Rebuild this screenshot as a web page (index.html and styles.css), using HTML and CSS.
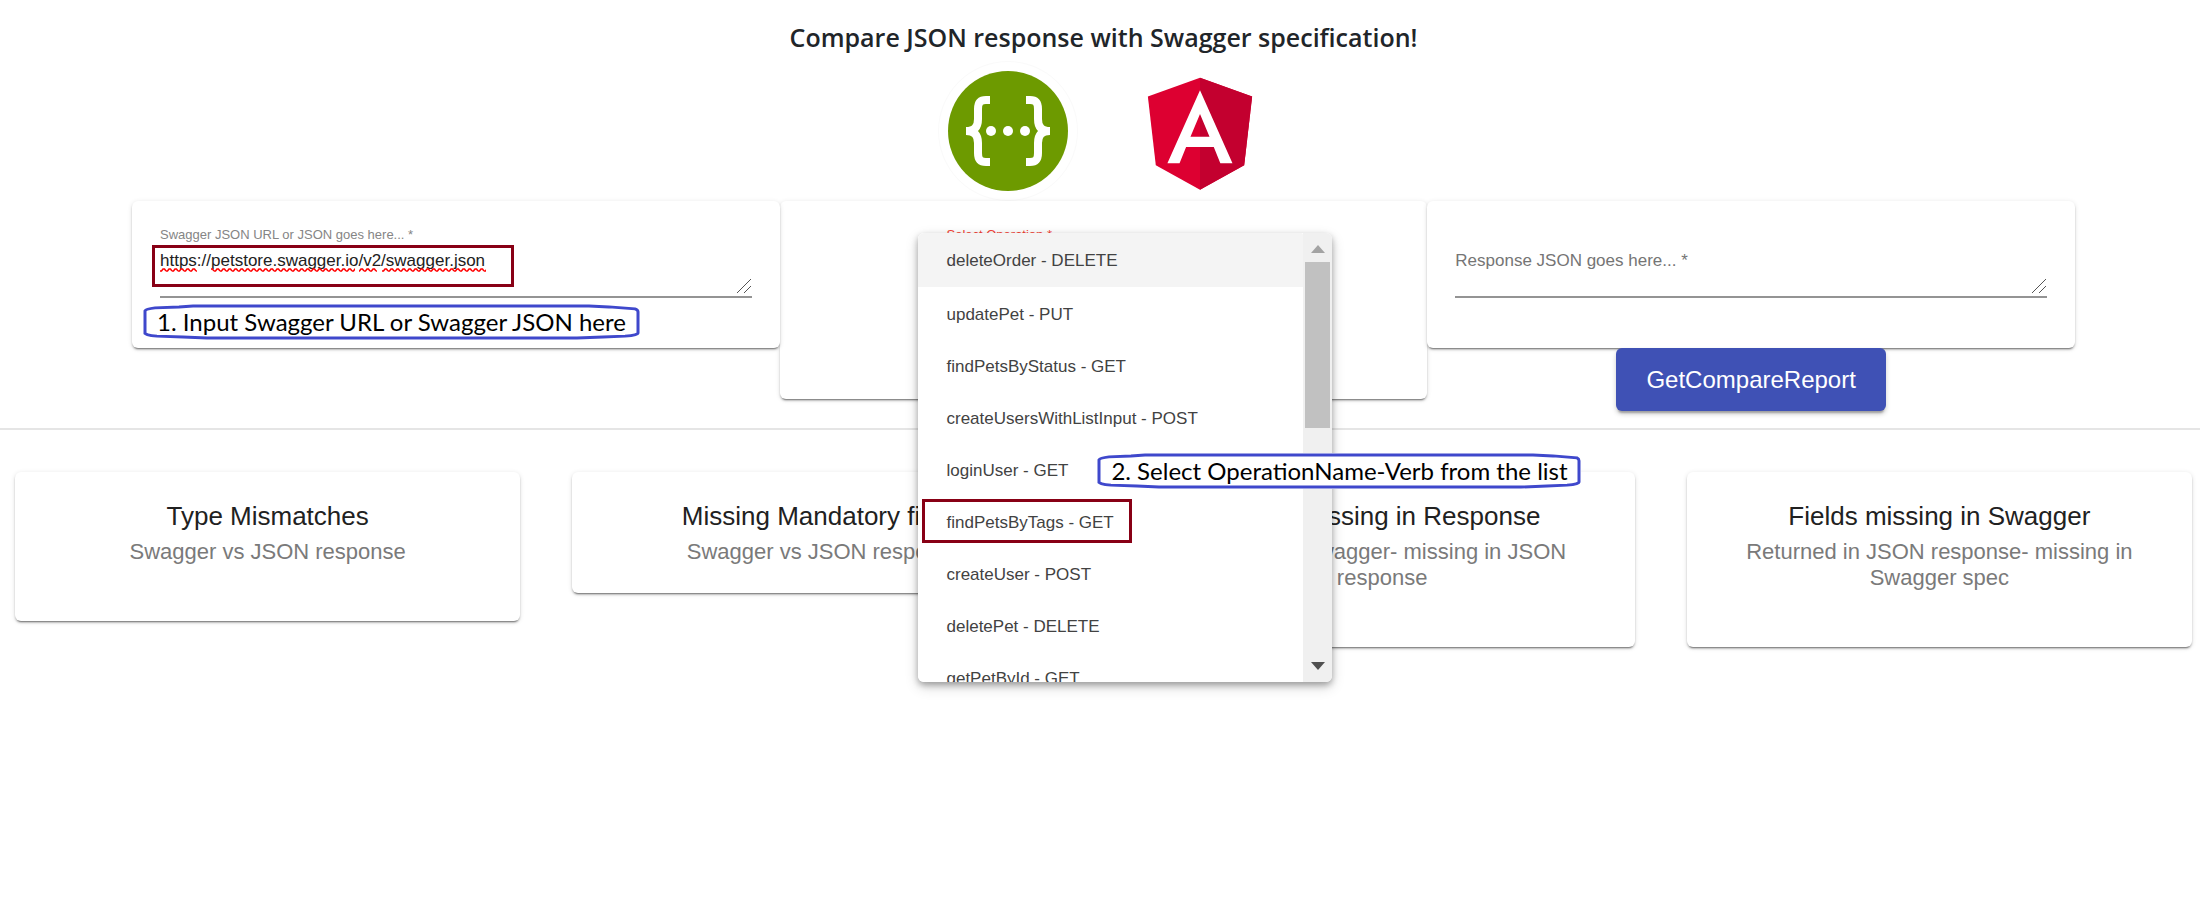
FILE: index.html
```html
<!DOCTYPE html>
<html lang="en">
<head>
<meta charset="utf-8">
<title>Compare JSON response with Swagger specification!</title>
<link rel="stylesheet" href="styles.css">
</head>
<body>
<header class="header">
  <h1 class="page-title">Compare JSON response with Swagger specification!</h1>
  <div class="logos">
    <svg class="logo" viewBox="0 0 140 140" role="img" aria-label="Swagger">
      <circle cx="70" cy="70" r="69.500" fill="none" stroke="#fafafa"/>
      <circle cx="70" cy="70" r="60" fill="#6d9a00"/>
      <g fill="none" stroke="#fff" stroke-width="8">
        <path d="M52 39h-4c-6 0-8 3-8 9V58c0 7-3 12-12 12c9 0 12 5 12 12v10c0 6 2 9 8 9h4"/>
        <path d="M88 39h4c6 0 8 3 8 9V58c0 7 3 12 12 12c-9 0-12 5-12 12v10c0 6-2 9-8 9h-4"/>
      </g>
      <g fill="#fff"><circle cx="53" cy="70" r="5"/><circle cx="70" cy="70" r="5"/><circle cx="87" cy="70" r="5"/></g>
    </svg>
    <svg class="logo" viewBox="0 0 250 250" role="img" aria-label="Angular">
      <path fill="#dd0031" d="M125 30 31.900 63.200l14.200 123.100L125 230l78.900-43.700 14.200-123.100z"/>
      <path fill="#c3002f" d="M125 30v200l78.900-43.700 14.200-123.100z"/>
      <path fill="#fff" d="M125 52.100 66.800 182.600h21.700l11.700-29.200h49.400l11.700 29.200H183zM142 135.400h-34l17-40.900z"/>
    </svg>
  </div>
</header>

<form class="compare">
  <section class="column">
    <div class="card field">
      <label class="field-label" for="spec">Swagger JSON URL or JSON goes here... *</label>
      <div class="input-wrap">
        <textarea class="text-area" id="spec" spellcheck="false">https://petstore.swagger.io/v2/swagger.json</textarea>
        <svg class="squiggle" viewBox="0 0 326 4" aria-hidden="true">
          <defs><pattern id="wave" width="6" height="4" patternUnits="userSpaceOnUse"><path d="M0 3 1.500 3 3 1 4.500 1 6 3" fill="none" stroke="#f00" stroke-width="1.500"/></pattern></defs>
          <path fill="url(#wave)" d="M0 0h37v4H0zM51 0h144v4H51zM199 0h18v4h-18zM222 0h104v4H222z"/>
        </svg>
        <svg class="grip" viewBox="0 0 14 14" aria-hidden="true"><path d="M0 14 14 0M7 14 14 7" stroke="#555" fill="none"/></svg>
        <span class="mark mark-url"></span>
      </div>
      <p class="note note-input">
        <svg class="note-outline" viewBox="0 0 497 37" preserveAspectRatio="none" aria-hidden="true"><path d="M2 31V7Q3 5 12 4L36 3 50 2H446L466 3 492 5Q495 6 495 8V30Q495 32 482 33L460 34 434 35H64L40 34 14 33Q2 32 2 30z"/></svg>
        1. Input Swagger URL or Swagger JSON here
      </p>
    </div>
  </section>

  <section class="column">
    <div class="card card-select">
      <div class="select-field">
        <label class="field-label field-label-error" for="operation">Select Operation *</label>
        <div class="panel">
          <div class="panel-body">
            <select class="options" id="operation" size="9">
              <option>deleteOrder - DELETE</option>
              <option>updatePet - PUT</option>
              <option>findPetsByStatus - GET</option>
              <option>createUsersWithListInput - POST</option>
              <option>loginUser - GET</option>
              <option>findPetsByTags - GET</option>
              <option>createUser - POST</option>
              <option>deletePet - DELETE</option>
              <option>getPetById - GET</option>
            </select>
            <div class="scrollbar" aria-hidden="true">
              <svg class="arrow" viewBox="0 0 14 8"><path d="M0 8 7 0l7 8z" fill="#a3a3a3"/></svg>
              <span class="thumb"></span>
              <svg class="arrow arrow-down" viewBox="0 0 14 8"><path d="M0 0 7 8l7-8z" fill="#505050"/></svg>
            </div>
          </div>
          <span class="mark mark-option"></span>
          <p class="note note-select">
            <svg class="note-outline" viewBox="0 0 484 37" preserveAspectRatio="none" aria-hidden="true"><path d="M2 31V7Q3 5 12 4L34 3 48 2H436L456 3 480 5Q482 6 482 8V30Q482 32 470 33L450 34 424 35H62L40 34 14 33Q2 32 2 30z"/></svg>
            2. Select OperationName-Verb from the list
          </p>
        </div>
      </div>
    </div>
  </section>

  <section class="column">
    <div class="card field field-empty">
      <div class="input-wrap">
        <textarea class="text-area" aria-label="Response JSON" placeholder="Response JSON goes here... *"></textarea>
        <svg class="grip" viewBox="0 0 14 14" aria-hidden="true"><path d="M0 14 14 0M7 14 14 7" stroke="#555" fill="none"/></svg>
      </div>
    </div>
    <button class="report-button" type="button">GetCompareReport</button>
  </section>
</form>

<hr class="divider">

<main class="results">
  <article class="card result result-tall">
    <h2 class="result-title">Type Mismatches</h2>
    <p class="result-text">Swagger vs JSON response</p>
  </article>
  <article class="card result">
    <h2 class="result-title">Missing Mandatory fields</h2>
    <p class="result-text">Swagger vs JSON response</p>
  </article>
  <article class="card result result-tall">
    <h2 class="result-title">Fields missing in Response</h2>
    <p class="result-text">Present in Swagger- missing in JSON response</p>
  </article>
  <article class="card result result-tall">
    <h2 class="result-title">Fields missing in Swagger</h2>
    <p class="result-text">Returned in JSON response- missing in Swagger spec</p>
  </article>
</main>
</body>
</html>
```
FILE: styles.css
```css
* { box-sizing: border-box; }

body {
  min-height: 100vh;
  margin: 0;
  background: #fff;
  color: #212121;
  font-family: "Liberation Sans", Arial, sans-serif;
}

.header { padding: 19px 8px 0 15px; }

.page-title {
  margin: 0 0 6px;
  color: #212529;
  font: 600 25px/36px "Open Sans", "Noto Sans", sans-serif;
  text-align: center;
}

.logos { display: flex; justify-content: center; gap: 52px; }
.logo { width: 140px; height: 140px; }

.compare {
  display: grid;
  grid-template-columns: repeat(3, 1fr);
  align-items: start;
  padding: 0 125px 0 132px;
}

.column { display: flex; flex-direction: column; align-items: center; }

.card {
  width: 100%;
  border-radius: 6px;
  background: #fff;
  box-shadow: 0 3px 1px -2px rgba(0, 0, 0, .3), 0 2px 2px rgba(0, 0, 0, .2), 0 1px 5px rgba(0, 0, 0, .12);
}

.field { position: relative; padding: 26px 28px 50px; }
.field-empty { padding-top: 42px; }

.field-label {
  display: block;
  color: #858585;
  font-size: 13px;
  line-height: 16px;
}
.field-label-error { color: #f44336; }

.input-wrap { position: relative; }

.text-area {
  display: block;
  width: 100%;
  height: 55px;
  padding: 8px 0 0;
  border: 0;
  border-bottom: 2px solid #949494;
  outline: 0;
  background: transparent;
  color: #212121;
  font: 17px/20px "Liberation Sans", Arial, sans-serif;
  resize: none;
}
.text-area::placeholder { color: #757575; opacity: 1; }

.squiggle { position: absolute; top: 25px; left: 0; width: 326px; height: 4px; }
.grip { position: absolute; right: 1px; bottom: 5px; width: 14px; height: 14px; }

.mark { position: absolute; border: 3px solid #880015; }
.mark-url { top: 2px; left: -8px; width: 362px; height: 42px; }
.mark-option { top: 266px; left: 4px; width: 210px; height: 44px; }

.note {
  position: absolute;
  margin: 0;
  color: #000;
  font: 24px/36px Lato, sans-serif;
  text-align: center;
  white-space: nowrap;
}
.note-input { top: 103px; left: 11px; width: 497px; }
.note-select { top: 220px; left: 179px; width: 484px; background: #fff; }
.note-outline {
  position: absolute;
  inset: 0;
  width: 100%;
  height: 100%;
  fill: none;
  stroke: #3f48cc;
  stroke-width: 3px;
}

.card-select { padding: 26px 28px 156px; }
.select-field { position: relative; width: 314px; margin: 0 auto; }

.panel {
  position: absolute;
  z-index: 1;
  top: 6px;
  left: -28px;
  width: 414px;
  border-radius: 6px;
  background: #fff;
  box-shadow: 0 3px 6px rgba(0, 0, 0, .3), 0 5px 14px rgba(0, 0, 0, .16);
}
.panel-body { display: flex; height: 449px; overflow: hidden; border-radius: 6px; }

.options {
  flex: 1;
  height: 480px;
  padding: 0;
  border: 0;
  outline: 0;
  overflow: hidden;
  background: #fff;
  color: #424242;
  font: 17px/20px "Liberation Sans", Arial, sans-serif;
}
.options option { height: 52px; padding: 18px 28px 14px; color: #424242; }
.options option:first-child { height: 54px; background: #f4f4f4; }

.scrollbar {
  display: flex;
  flex-direction: column;
  align-items: center;
  width: 29px;
  padding: 12px 2px;
  background: #f0f0f0;
}
.arrow { width: 14px; height: 8px; }
.arrow-down { margin-top: auto; }
.thumb { width: 100%; height: 166px; margin-top: 9px; background: #c1c1c1; }

.report-button {
  padding: 16px 30px;
  border: 0;
  border-radius: 6px;
  background: #3f51b5;
  box-shadow: 0 4px 2px -2px rgba(0, 0, 0, .25), 0 3px 5px rgba(0, 0, 0, .2);
  color: #fff;
  font: 24px/31px "Liberation Sans", Arial, sans-serif;
  z-index: 1;
}

.divider {
  height: 2px;
  margin: 17px 0 42px;
  border: 0;
  background: #e5e5e5;
}

.results {
  display: grid;
  grid-template-columns: repeat(4, 1fr);
  align-items: start;
  gap: 52px;
  padding: 0 8px 0 15px;
}
.result { padding: 28px 56px; text-align: center; }
.result-tall { padding-bottom: 56px; }
.result-title { margin: 0 0 7px; font-size: 26px; font-weight: 400; line-height: 32px; }
.result-text { margin: 0; color: #7a7a7a; font-size: 22px; line-height: 26px; }
```
